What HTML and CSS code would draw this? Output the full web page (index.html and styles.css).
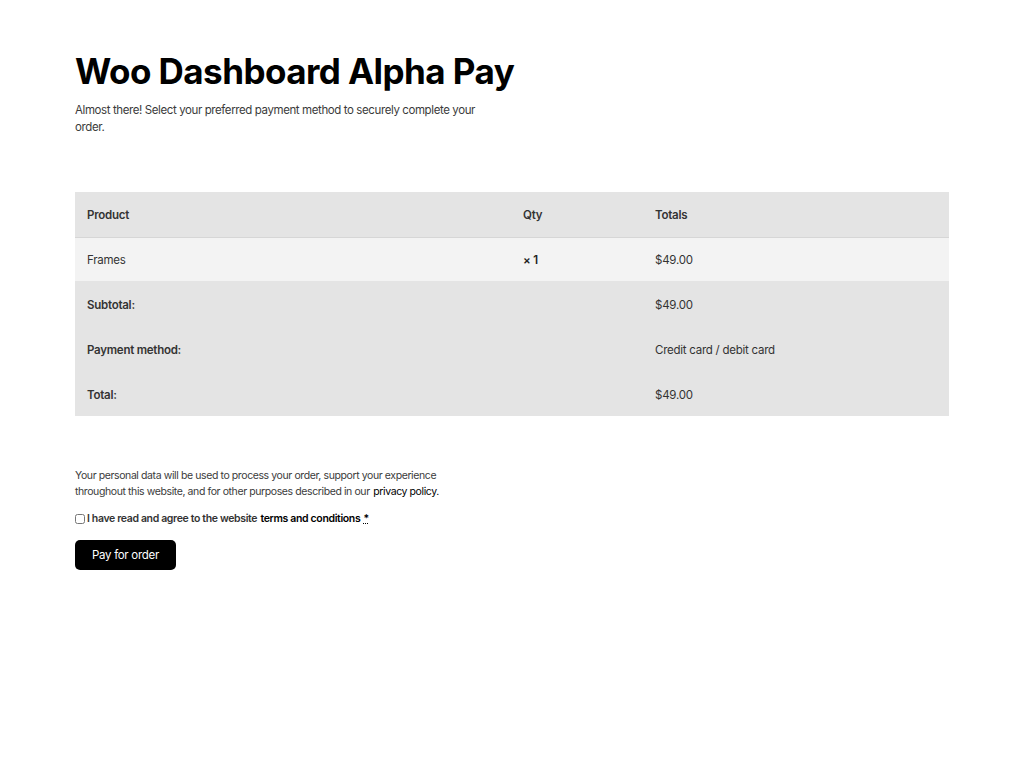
FILE: index.html
```html
<!DOCTYPE html>
<html lang="en">
<head>
<meta charset="utf-8">
<title>Woo Dashboard Alpha Pay</title>
<link rel="stylesheet" href="styles.css">
</head>
<body>
<main class="page">
  <header class="intro">
    <h1 class="title">Woo Dashboard Alpha Pay</h1>
    <p class="lead">Almost there! Select your preferred payment method to securely complete your order.</p>
  </header>

  <table class="order">
    <thead>
      <tr>
        <th class="c-prod">Product</th>
        <th class="c-qty">Qty</th>
        <th class="c-tot">Totals</th>
      </tr>
    </thead>
    <tbody>
      <tr class="item">
        <td>Frames</td>
        <td class="qty">×&nbsp;1</td>
        <td>$49.00</td>
      </tr>
    </tbody>
    <tfoot>
      <tr>
        <th colspan="2">Subtotal:</th>
        <td>$49.00</td>
      </tr>
      <tr>
        <th colspan="2">Payment method:</th>
        <td>Credit card / debit card</td>
      </tr>
      <tr>
        <th colspan="2">Total:</th>
        <td>$49.00</td>
      </tr>
    </tfoot>
  </table>

  <section class="terms">
    <p class="privacy">Your personal data will be used to process your order, support your experience throughout this website, and for other purposes described in our <a href="#" class="link">privacy policy.</a></p>
    <label class="agree"><input type="checkbox" class="check"><span>I have read and agree to the website <a href="#" class="link strong">terms and conditions</a></span><abbr class="req" title="required">*</abbr></label>
    <button class="pay" type="button">Pay for order</button>
  </section>
</main>
</body>
</html>
```

FILE: styles.css
```css
* { box-sizing: border-box; }
html, body { margin: 0; padding: 0; background: #fff; }
body {
  font-family: Inter, "Noto Sans", "Liberation Sans", sans-serif;
  color: #000;
}
.page {
  width: 874px;
  margin: 0 0 0 75px;
  padding-top: 49px;
}
.intro { max-width: 600px; }
.title {
  margin: 0;
  font-size: 35px;
  font-weight: 700;
  letter-spacing: -0.55px;
  line-height: 44px;
}
.lead {
  margin: 9px 0 0;
  width: 420px;
  font-size: 11.5px;
  letter-spacing: -0.4px;
  line-height: 17px;
  color: #3b3b3b;
}
.order {
  margin-top: 56px;
  width: 100%;
  border-collapse: collapse;
  font-size: 11.5px;
  letter-spacing: -0.25px;
  color: #333;
}
.order th, .order td {
  text-align: left;
  padding: 2px 12px 0;
  height: 45px;
  vertical-align: middle;
}
.order thead th {
  background: #e4e4e4;
  font-weight: 600;
  border-bottom: 1px solid #d6d6d6;
  height: 45px;
}
.c-prod { width: 436px; }
.c-qty { width: 132px; }
.order tbody td { background: #f3f3f3; height: 44px; }
.order .qty { font-weight: 600; color: #222; }
.order tfoot th, .order tfoot td { background: #e4e4e4; }
.order tfoot th { font-weight: 600; }
.terms { margin-top: 52px; }
.privacy {
  margin: 0;
  width: 380px;
  font-size: 10.5px;
  letter-spacing: -0.4px;
  line-height: 16px;
  color: #3b3b3b;
}
.link { color: #000; text-decoration: none; margin-left: 1px; }
.agree {
  display: flex;
  align-items: center;
  margin-top: 12px;
  font-size: 10.5px;
  letter-spacing: -0.35px;
  line-height: 14px;
  font-weight: 600;
  color: #333;
}
.agree .strong { font-weight: 600; color: #000; }
.check {
  margin: 0 2px 0 0;
  width: 10px;
  height: 10px;
}
.req {
  margin-left: 3px;
  color: #000;
  text-decoration: underline dotted;
  text-decoration-thickness: 1px;
}
.pay {
  display: block;
  margin-top: 14px;
  height: 30px;
  padding: 0 17px;
  background: #000;
  color: #fff;
  border: 0;
  border-radius: 5px;
  font-family: inherit;
  font-size: 11.5px;
  letter-spacing: -0.3px;
}
```
